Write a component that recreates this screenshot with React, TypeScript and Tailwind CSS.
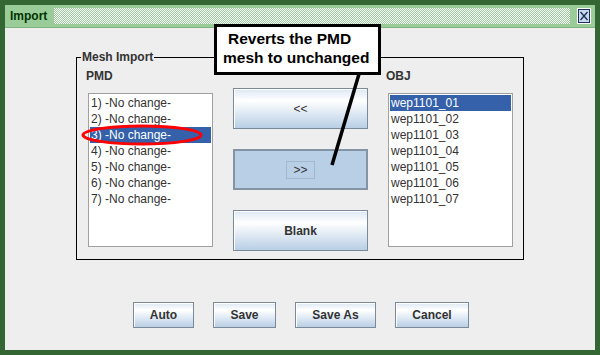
import React from "react";

const pmdItems = [1, 2, 3, 4, 5, 6, 7].map((n) => `${n}) -No change-`);
const objItems = [1, 2, 3, 4, 5, 6, 7].map((n) => `wep1101_0${n}`);

const btn =
  "border border-[#7a8a99] bg-gradient-to-b from-[#dde8f3] via-[#ffffff] via-30% to-[#b8cfe5] shadow-[inset_1px_1px_0_#ffffff] flex items-center justify-center text-[12px] text-[#333333]";

interface ListProps {
  items: string[];
  selected: number;
}

const ListBox: React.FC<ListProps> = ({ items, selected }) => (
  <div className="w-[125px] h-[154px] bg-white border border-[#a0a0a0] p-[1px]">
    {items.map((item, i) => (
      <div
        key={item}
        className={
          "h-[16px] leading-[16px] pl-[1px] text-[12px] " +
          (i === selected ? "bg-[#3461aa] text-white" : "text-[#333333]")
        }
      >
        {item}
      </div>
    ))}
  </div>
);

export default function App() {
  return (
    <div
      className="relative w-[600px] h-[355px] bg-[#336633] p-[5px] flex flex-col"
      style={{ fontFamily: '"Liberation Sans", Arial, sans-serif' }}
    >
      {/* Title bar */}
      <div className="h-[23px] bg-[#99cc99] border-b border-[#80b380] flex items-center pl-[5px] pr-[4px]">
        <span className="text-[12px] font-bold text-[#003300] leading-none">Import</span>
        <svg className="flex-1 h-[16px] ml-[7px] mr-[7px]" shapeRendering="crispEdges">
          <defs>
            <pattern id="dots" width="2" height="2" patternUnits="userSpaceOnUse">
              <rect x="0" y="0" width="1" height="1" fill="#ffffff" />
              <rect x="1" y="1" width="1" height="1" fill="#ffffff" />
            </pattern>
          </defs>
          <rect width="100%" height="100%" fill="url(#dots)" />
        </svg>
        <div className="w-[14px] h-[16px] border border-white bg-[#b8cfe5] flex items-center justify-center">
          <svg width="12" height="14" viewBox="0 0 12 14">
            <rect x="0.5" y="0.5" width="11" height="13" fill="#c8daf0" stroke="#1c2c54" />
            <path d="M2.5 3 L9.5 11 M9.5 3 L2.5 11" stroke="#1c2c54" strokeWidth="1.3" />
          </svg>
        </div>
      </div>

      {/* Content */}
      <div className="flex-1 bg-[#eeeeee] flex flex-col">
        {/* Group box */}
        <fieldset className="ml-[71px] mt-[22px] w-[448px] h-[210px] border border-black px-0 pt-0 pb-0 m-0">
          <legend className="ml-[4px] px-[1px] text-[12px] font-bold text-[#333333] leading-[14px]">
            Mesh Import
          </legend>
          <div className="flex pl-[9px] pt-[5px]">
            <div className="flex flex-col w-[127px]">
              <div className="text-[12px] font-bold text-[#333333] leading-[14px]">PMD</div>
              <div className="ml-[2px] mt-[10px]">
                <ListBox items={pmdItems} selected={2} />
              </div>
            </div>

            <div className="ml-[20px] mt-[19px] flex flex-col gap-[20px]">
              <button className={btn + " w-[135px] h-[41px]"}>&lt;&lt;</button>
              <button className="w-[135px] h-[41px] border-2 border-[#8494a5] bg-[#b8cfe5] flex items-center justify-center text-[12px] text-[#333333]">
                <span className="border border-[#a3b8cc] w-[29px] h-[18px] flex items-center justify-center">
                  &gt;&gt;
                </span>
              </button>
              <button className={btn + " w-[135px] h-[41px] font-bold"}>Blank</button>
            </div>

            <div className="ml-[18px] flex flex-col">
              <div className="text-[12px] font-bold text-[#333333] leading-[14px]">OBJ</div>
              <div className="ml-[2px] mt-[10px]">
                <ListBox items={objItems} selected={0} />
              </div>
            </div>
          </div>
        </fieldset>

        {/* Bottom buttons */}
        <div className="mt-[42px] flex justify-center gap-[19px] pl-[2px]">
          <button className={btn + " w-[61px] h-[26px] font-bold"}>Auto</button>
          <button className={btn + " w-[63px] h-[26px] font-bold"}>Save</button>
          <button className={btn + " w-[81px] h-[26px] font-bold"}>Save As</button>
          <button className={btn + " w-[74px] h-[26px] font-bold"}>Cancel</button>
        </div>
      </div>

      {/* Annotation: red ellipse around item 3, pointer line */}
      <svg className="absolute left-0 top-0 pointer-events-none" width="600" height="355">
        <ellipse cx="142" cy="135" rx="59" ry="9" fill="none" stroke="#ff0000" strokeWidth="3" />
        <line x1="359" y1="74" x2="332" y2="165" stroke="#000000" strokeWidth="3.5" />
      </svg>

      {/* Annotation: callout */}
      <div className="absolute left-[214px] top-[24px] w-[167px] h-[51px] bg-white border-[3px] border-black pl-[6px] pt-[2px] text-[15.5px] font-bold text-black leading-[19px]">
        <div className="pl-[5px]">Reverts the PMD</div>
        <div>mesh to unchanged</div>
      </div>
    </div>
  );
}
